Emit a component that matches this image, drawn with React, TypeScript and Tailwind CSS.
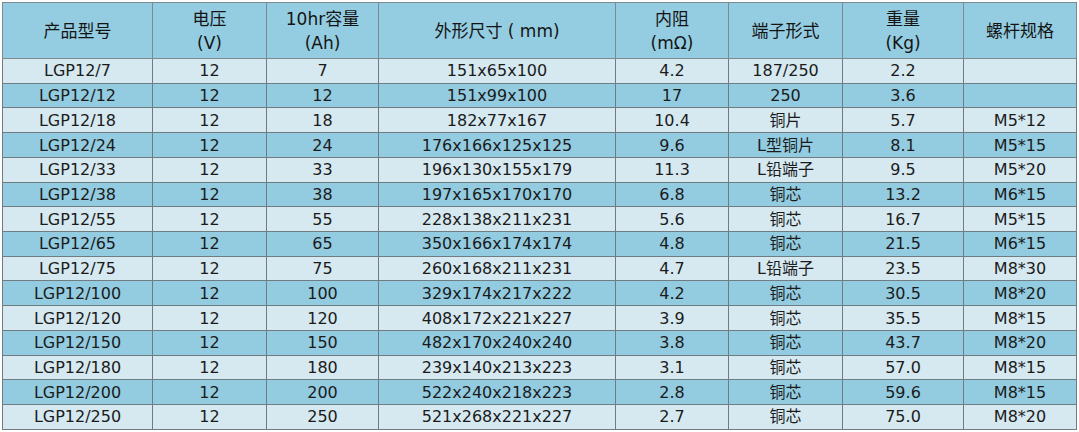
import React from "react";

type Row = [string, string, string, string, string, string, string, string];

const ROWS: Row[] = [
  ["LGP12/7", "12", "7", "151x65x100", "4.2", "187/250", "2.2", ""],
  ["LGP12/12", "12", "12", "151x99x100", "17", "250", "3.6", ""],
  ["LGP12/18", "12", "18", "182x77x167", "10.4", "铜片", "5.7", "M5*12"],
  ["LGP12/24", "12", "24", "176x166x125x125", "9.6", "L型铜片", "8.1", "M5*15"],
  ["LGP12/33", "12", "33", "196x130x155x179", "11.3", "L铅端子", "9.5", "M5*20"],
  ["LGP12/38", "12", "38", "197x165x170x170", "6.8", "铜芯", "13.2", "M6*15"],
  ["LGP12/55", "12", "55", "228x138x211x231", "5.6", "铜芯", "16.7", "M5*15"],
  ["LGP12/65", "12", "65", "350x166x174x174", "4.8", "铜芯", "21.5", "M6*15"],
  ["LGP12/75", "12", "75", "260x168x211x231", "4.7", "L铅端子", "23.5", "M8*30"],
  ["LGP12/100", "12", "100", "329x174x217x222", "4.2", "铜芯", "30.5", "M8*20"],
  ["LGP12/120", "12", "120", "408x172x221x227", "3.9", "铜芯", "35.5", "M8*15"],
  ["LGP12/150", "12", "150", "482x170x240x240", "3.8", "铜芯", "43.7", "M8*20"],
  ["LGP12/180", "12", "180", "239x140x213x223", "3.1", "铜芯", "57.0", "M8*15"],
  ["LGP12/200", "12", "200", "522x240x218x223", "2.8", "铜芯", "59.6", "M8*15"],
  ["LGP12/250", "12", "250", "521x268x221x227", "2.7", "铜芯", "75.0", "M8*20"],
];

const HEADERS: string[][] = [
  ["产品型号"],
  ["电压", "(V)"],
  ["10hr容量", "(Ah)"],
  ["外形尺寸 ( mm)"],
  ["内阻", "(mΩ)"],
  ["端子形式"],
  ["重量", "(Kg)"],
  ["螺杆规格"],
];

const WIDTHS = [150, 114, 112, 237, 113, 114, 121, 113];

export default function App() {
  return (
    <div
      className="w-[1079px] h-[432px] bg-white pl-[2px] pt-[2px] text-[#1b1b1b]"
      style={{ fontFamily: '"DejaVu Sans", "Noto Sans CJK SC", sans-serif' }}
    >
      <table className="table-fixed border-collapse border border-[#a7b0b4] w-[1074px]">
        <colgroup>
          {WIDTHS.map((w, i) => (
            <col key={i} style={{ width: w }} />
          ))}
        </colgroup>
        <thead>
          <tr className="h-[56px] bg-[#94cde1]">
            {HEADERS.map((lines, i) => (
              <th
                key={i}
                className="border border-[#7d8a8f] font-normal text-[17px] leading-[24px] text-center p-0 text-[#141414]"
              >
                {lines.map((l) => (
                  <div key={l}>{l}</div>
                ))}
              </th>
            ))}
          </tr>
        </thead>
        <tbody>
          {ROWS.map((row, r) => (
            <tr
              key={row[0]}
              className={`h-[24.73px] ${r % 2 === 0 ? "bg-[#d6e9f1]" : "bg-[#93cbe0]"}`}
            >
              {row.map((cell, c) => (
                <td
                  key={c}
                  className="border border-[#6f7c81] text-center text-[16px] leading-[20px] p-0 pt-[1px]"
                >
                  {cell}
                </td>
              ))}
            </tr>
          ))}
        </tbody>
      </table>
    </div>
  );
}
